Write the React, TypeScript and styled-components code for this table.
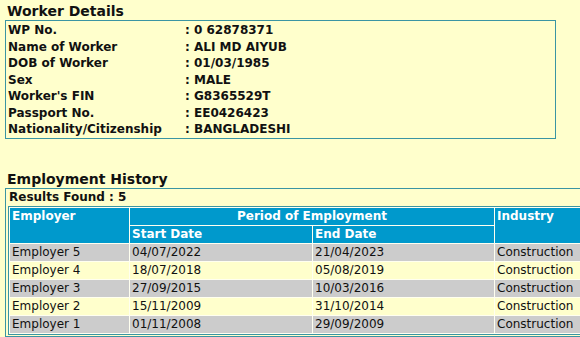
import styled, { createGlobalStyle } from "styled-components";

interface Employment {
  employer: string;
  start: string;
  end: string;
  industry: string;
}

const details: [string, string][] = [
  ["WP No.", "0 62878371"],
  ["Name of Worker", "ALI MD AIYUB"],
  ["DOB of Worker", "01/03/1985"],
  ["Sex", "MALE"],
  ["Worker's FIN", "G8365529T"],
  ["Passport No.", "EE0426423"],
  ["Nationality/Citizenship", "BANGLADESHI"],
];

const history: Employment[] = [
  { employer: "Employer 5", start: "04/07/2022", end: "21/04/2023", industry: "Construction" },
  { employer: "Employer 4", start: "18/07/2018", end: "05/08/2019", industry: "Construction" },
  { employer: "Employer 3", start: "27/09/2015", end: "10/03/2016", industry: "Construction" },
  { employer: "Employer 2", start: "15/11/2009", end: "31/10/2014", industry: "Construction" },
  { employer: "Employer 1", start: "01/11/2008", end: "29/09/2009", industry: "Construction" },
];

const App = () => {
  return (
    <Page>
      <GlobalStyle />
      <SectionTitle>Worker Details</SectionTitle>
      <DetailsBox>
        {details.map(([label, value]) => (
          <DetailRow key={label}>
            <DetailLabel>{label}</DetailLabel>
            <DetailValue>: {value}</DetailValue>
          </DetailRow>
        ))}
      </DetailsBox>

      <SectionTitle $spaced>Employment History</SectionTitle>
      <HistoryBox>
        <ResultsCount>Results Found : 5</ResultsCount>
        <HistoryTable>
          <thead>
            <tr>
              <HeadCell rowSpan={2} $width={119}>Employer</HeadCell>
              <HeadCell colSpan={2} $center>Period of Employment</HeadCell>
              <HeadCell rowSpan={2} $width={140}>Industry</HeadCell>
            </tr>
            <tr>
              <HeadCell $width={182}>Start Date</HeadCell>
              <HeadCell $width={181}>End Date</HeadCell>
            </tr>
          </thead>
          <tbody>
            {history.map((row, i) => (
              <tr key={row.employer}>
                <DataCell $shaded={i % 2 === 0}>{row.employer}</DataCell>
                <DataCell $shaded={i % 2 === 0}>{row.start}</DataCell>
                <DataCell $shaded={i % 2 === 0}>{row.end}</DataCell>
                <DataCell $shaded={i % 2 === 0}>{row.industry}</DataCell>
              </tr>
            ))}
          </tbody>
        </HistoryTable>
      </HistoryBox>
    </Page>
  );
};

export default App;

const GlobalStyle = createGlobalStyle`
  html, body {
    margin: 0;
    padding: 0;
    background: #ffffcc;
    overflow: hidden;
  }
  body {
    font-family: "DejaVu Sans", Verdana, sans-serif;
    color: #111;
  }
`;

const Page = styled.div`
  width: 720px;
  padding: 2px 0 0 5px;
`;

const SectionTitle = styled.div<{ $spaced?: boolean }>`
  font-size: 14px;
  font-weight: bold;
  line-height: 18px;
  padding-left: 2px;
  margin-top: ${({ $spaced }) => ($spaced ? "31px" : "0")};
`;

const DetailsBox = styled.div`
  width: 547px;
  border: 1px solid #3a95a3;
  padding: 1px 0 0 2px;
`;

const DetailRow = styled.div`
  display: flex;
  height: 16.5px;
  align-items: center;
  font-size: 12px;
  font-weight: bold;
`;

const DetailLabel = styled.span`
  width: 177px;
`;

const DetailValue = styled.span``;

const HistoryBox = styled.div`
  border: 1px solid #3a95a3;
  border-right: none;
  padding: 0 0 1px 2px;
`;

const ResultsCount = styled.div`
  font-size: 12px;
  font-weight: bold;
  line-height: 17px;
  padding-left: 1px;
`;

const HistoryTable = styled.table`
  border: 1px solid #3a95a3;
  border-collapse: separate;
  border-spacing: 1px;
  background: #fffff0;
  font-size: 12px;
  table-layout: fixed;
`;

const HeadCell = styled.th<{ $width?: number; $center?: boolean }>`
  background: #0099cc;
  color: #ffffff;
  font-weight: bold;
  text-align: ${({ $center }) => ($center ? "center" : "left")};
  vertical-align: top;
  height: 17px;
  padding: 0 2px;
  line-height: 17px;
  width: ${({ $width }) => ($width ? `${$width - 4}px` : "auto")};
`;

const DataCell = styled.td<{ $shaded: boolean }>`
  background: ${({ $shaded }) => ($shaded ? "#cccccc" : "#ffffcc")};
  height: 17px;
  line-height: 17px;
  padding: 0 2px;
  white-space: nowrap;
`;
